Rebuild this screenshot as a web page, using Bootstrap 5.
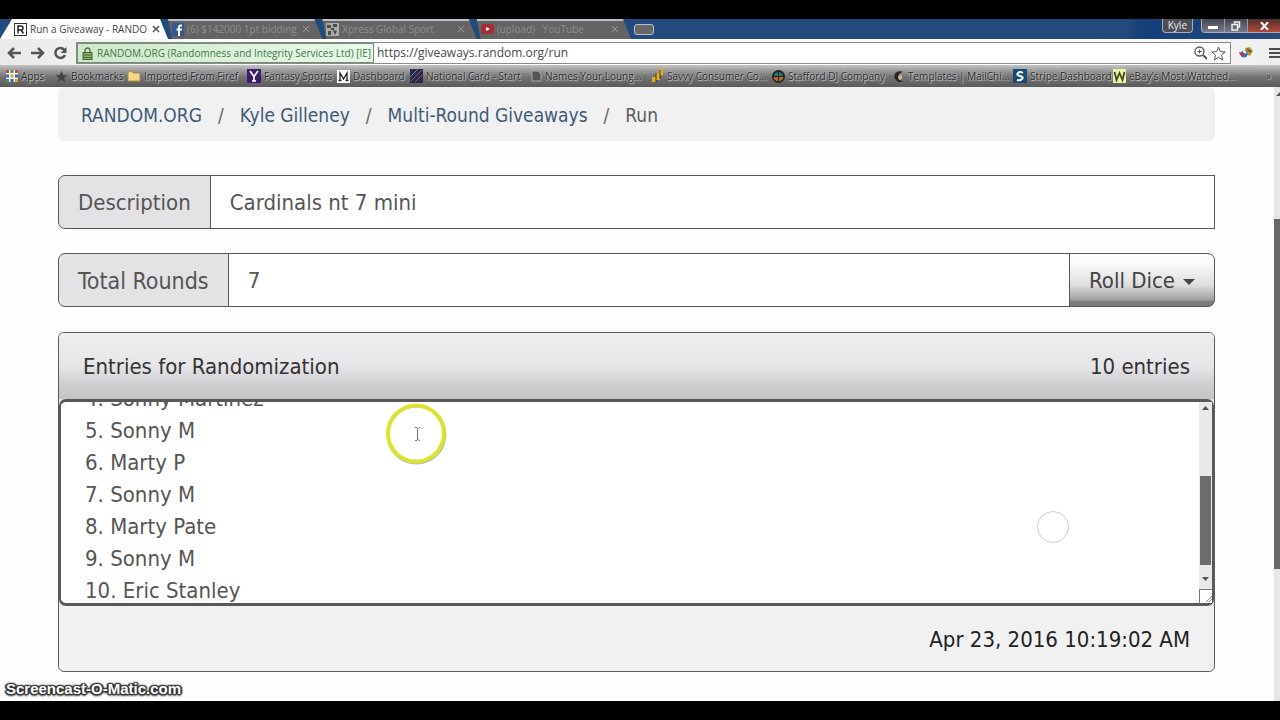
<!DOCTYPE html>
<html lang="en">
<head>
<meta charset="utf-8">
<meta name="viewport" content="width=device-width, initial-scale=1">
<title>Run a Giveaway - RANDOM.ORG</title>
<link href="https://cdn.jsdelivr.net/npm/bootstrap@5.3.0/dist/css/bootstrap.min.css" rel="stylesheet">
<style>
  :root { --ui: "Open Sans", "Noto Sans", sans-serif; --line: #5c5a5d; --ink: #555; }
  body { font-family: "DejaVu Sans Condensed", "DejaVu Sans", sans-serif; font-size: 22px; line-height: 32px; color: var(--ink); background: #000; padding: 19px 0; }
  svg { flex: none; display: block; }

  /* window title bar and tabs */
  .titlebar { height: 20px; background: linear-gradient(90deg, #234a7c 0 88%, #17407a 89% 91%, #2b4a78 100%); font: 10px/20px var(--ui); }
  .tab-strip { width: 656px; }
  .browser-tab { flex: 1 1 0; min-width: 0; height: 20px; gap: 3px; padding: 0 12px 0 4px; background: linear-gradient(#b9bdc8 0 2px, #646464 2px); color: #8f8f8f; text-decoration: none; clip-path: polygon(0 0, calc(100% - 8px) 0, 100% 100%, 4px 100%); }
  .browser-tab.current { flex: 0 0 168px; padding: 0 8px 0 14px; background: #fff; color: #444; clip-path: polygon(12px 0, calc(100% - 8px) 0, 100% 100%, 0 100%); }
  .browser-tab span { flex: 1; min-width: 0; overflow: hidden; white-space: nowrap; }
  .new-tab { width: 20px; height: 11px; border: 1px solid #b9c0cc; border-radius: 3px; background: #666; padding: 0; margin: 0 2px 0 3px; flex: none; }
  .user-chip { height: 14px; padding: 0 5px; border: 1px solid #aab; border-top: 0; border-radius: 0 0 4px 4px; background: #4d4f58; color: #eee; font: 10px/13px var(--ui); }
  .win-controls { height: 14px; border: 1px solid #aab; border-width: 0 0 1px 1px; border-radius: 0 0 0 4px; overflow: hidden; }
  .win-controls button { width: 23px; border: 0; border-right: 1px solid #99a; padding: 0; background: linear-gradient(#43464f, #767b88); display: flex; align-items: center; justify-content: center; }
  .win-controls button:last-child { width: 32px; background: linear-gradient(#50302f, #b24a38); border: 0; }

  /* toolbar */
  .toolbar { height: 26px; background: linear-gradient(90deg, #e9e9e9 0, #fff 20%, #fff 85%, #eee); padding: 2px 0 0 7px; font: 12px/20px var(--ui); }
  .tool-btn { border: 0; background: none; padding: 0; }
  .omnibox { height: 22px; border: 1px solid #8b8b8b; background: #fff; }
  .cert { height: 20px; width: 297px; gap: 4px; padding: 0 4px; background: linear-gradient(90deg, #cfe8cb, #e9f8ea); border: 1px solid #6f8f6d; color: #3f7a43; font-size: 10px; white-space: nowrap; }
  .omnibox input { border: 0; padding: 0 3px; color: #484848; outline: 0; height: 20px; min-width: 0; background: none; }

  /* bookmarks */
  .bookmark-bar { display: grid; grid-template-columns: 49fr 72fr 120fr 90fr 73fr 121fr 120fr 121fr 121fr 120fr 100fr 153fr 14fr; height: 22px; padding-left: 6px; background: linear-gradient(#c3c3c3 0, #929292 7px, #727272 12px, #5b5b5b 100%); font: 10px/22px var(--ui); }
  .bookmark-bar a { display: flex; align-items: center; gap: 3px; min-width: 0; overflow: hidden; color: #262626; text-shadow: 0 0 2px #ddd, 1px 1px 1px #bbb; white-space: nowrap; text-decoration: none; }

  /* page */
  .page-body { background: #fefefe; padding: 0 59px 29px 58px; }
  .crumbs { --bs-breadcrumb-item-padding-x: 16px; --bs-breadcrumb-divider-color: #666; --bs-breadcrumb-item-active-color: #5c5c5c; background: #f1f1f1; border-radius: 6px; padding: 12px 23px 10px; margin-bottom: 34px; font-size: 19px; }
  .crumbs a { color: #3d5b76; text-decoration: none; }
  .field { height: 54px; margin-bottom: 24px; }
  .field .input-group-text, .field .form-control { font-size: 22px; line-height: 32px; padding: 2px 19px 0; color: var(--ink); border: 1px solid #59575a; }
  .field .input-group-text { background: #e3e2e4; border-radius: 7px 0 0 7px; }
  .field .input-group-text.wide { font-size: 23px; }
  .field .form-control { background: #fff; border-radius: 0; }
  .field .dice { font-size: 22px; line-height: 32px; padding: 2px 19px 0; color: #444; border: 1px solid #59575a; border-radius: 0 7px 7px 0; background: linear-gradient(#fcfcfc 15%, #dedede 60%, #a0a0a0 88%, #7c7c7c 92%); }
  .dice::after { border-width: 6px; border-bottom: 0; margin-left: 8px; vertical-align: 3px; }
  .entries { border: 1px solid var(--line); border-radius: 6px; overflow: hidden; background: #f1f1f1; color: inherit; margin-top: 25px; }
  .entries .card-header { height: 66px; padding: 2px 24px 0; color: #333; border: 0; background: linear-gradient(#f0eff0, #e6e5e7 50%, #cdcccf 80%, #c4c3c6); border-radius: 0; }
  .list-box { height: 207px; background: #e4e4e4; }
  .list-box textarea { height: 207px; width: 100%; resize: none; border: 2px solid #59575a; border-width: 3px 2px; border-radius: 7px; padding: 12px 24px; font-size: 22px; line-height: 32px; color: var(--ink); overflow: hidden; background: #fff; display: block; }
  .entries .card-footer { height: 65px; padding: 2px 24px 0; background: #f1f1f1; border: 0; color: #222; }
  .inner-bar { top: 3px; right: 2px; bottom: 3px; width: 13px; background: #e9e9e9; }
  .inner-thumb { position: absolute; left: 1px; right: 1px; top: 37%; height: 44%; background: #6c6c6c; }
  .ring { left: 326px; top: 3px; }
  .ghost-ring { right: 144px; top: 111px; }
  .page-bar { width: 6px; background: #e6e6e6; }
  .page-thumb { height: 57%; background: #686868; margin: auto 0; }
  .watermark { left: 6px; bottom: 2px; font: bold 15px/20px "Liberation Sans", Arial, sans-serif; color: #fff; text-shadow: 1px 1px 1px #333, -1px -1px 1px #333, 1px -1px 1px #333, -1px 1px 1px #333, 0 0 3px #333, 0 2px 2px #444, 2px 0 1px #444, -2px 0 1px #444; }
</style>
</head>
<body class="d-flex flex-column min-vh-100">

<header>
  <div class="titlebar d-flex align-items-start">
    <nav class="tab-strip d-flex align-items-center" aria-label="Tabs">
      <a class="browser-tab current d-flex align-items-center" href="#">
        <svg width="13" height="13" viewBox="0 0 13 13"><rect x=".5" y=".5" width="12" height="12" fill="#fff" stroke="#333"/><path d="M4 10.500V3h3a2 2 0 0 1 0 4H4M7 7l2.500 3.500" fill="none" stroke="#222" stroke-width="1.500"/></svg>
        <span>Run a Giveaway - RANDO</span>
        <svg width="8" height="8" viewBox="0 0 8 8"><path d="M1 1l6 6M7 1L1 7" stroke="#555" stroke-width="1.500"/></svg>
      </a>
      <a class="browser-tab d-flex align-items-center" href="#">
        <svg width="12" height="13" viewBox="0 0 12 13"><rect width="12" height="13" fill="#39578f"/><path d="M10 2.500H8.500Q7 2.500 7 4.500V13M4.500 6.500H10" stroke="#fff" stroke-width="2" fill="none"/></svg>
        <span>(6) $142000 1pt bidding</span>
        <svg width="8" height="8" viewBox="0 0 8 8"><path d="M1 1l6 6M7 1L1 7" stroke="#999"/></svg>
      </a>
      <a class="browser-tab d-flex align-items-center" href="#">
        <svg width="13" height="13" viewBox="0 0 13 13"><rect width="13" height="13" fill="#aaa"/><path d="M1 2h4v3H1zM7 1h4v3H7zM2 8h3v4H2zM7 7l4 1-2 4zM5 5h3v2H5z" fill="#4a4a4a"/></svg>
        <span>Xpress Global Sport</span>
        <svg width="8" height="8" viewBox="0 0 8 8"><path d="M1 1l6 6M7 1L1 7" stroke="#999"/></svg>
      </a>
      <a class="browser-tab d-flex align-items-center" href="#">
        <svg width="13" height="10" viewBox="0 0 13 10"><rect width="13" height="10" rx="3" fill="#a52b39"/><path d="M5 3l4 2-4 2z" fill="#fff"/></svg>
        <span>(upload) &nbsp; YouTube</span>
        <svg width="8" height="8" viewBox="0 0 8 8"><path d="M1 1l6 6M7 1L1 7" stroke="#999"/></svg>
      </a>
      <button class="new-tab" aria-label="New tab"></button>
    </nav>
    <div class="ms-auto d-flex gap-2">
      <button class="user-chip">Kyle</button>
      <div class="win-controls d-flex">
        <button aria-label="Minimize"><svg width="10" height="8"><path d="M0 4h10v3H0z" fill="#fff"/></svg></button>
        <button aria-label="Restore"><svg width="10" height="10" viewBox="0 0 10 10"><path d="M3.500 2.500V1h5v5H7M1 3.500h5.500V9H1z" fill="none" stroke="#eee" stroke-width="1.500"/></svg></button>
        <button aria-label="Close"><svg width="9" height="8" viewBox="0 0 9 8"><path d="M1 0l7 8M8 0L1 8" stroke="#fff" stroke-width="2"/></svg></button>
      </div>
    </div>
  </div>

  <div class="toolbar d-flex align-items-center">
    <button class="tool-btn me-2" aria-label="Back"><svg width="15" height="14" viewBox="0 0 15 14"><path d="M14 7H2M7 2L2 7l5 5" fill="none" stroke="#555" stroke-width="2.500"/></svg></button>
    <button class="tool-btn me-2" aria-label="Forward"><svg width="15" height="14" viewBox="0 0 15 14"><path d="M1 7h12M8 2l5 5-5 5" fill="none" stroke="#555" stroke-width="2.500"/></svg></button>
    <button class="tool-btn me-2" aria-label="Reload"><svg width="15" height="14" viewBox="0 0 15 14"><path d="M11.500 4A5 5 0 1 0 12 9" fill="none" stroke="#555" stroke-width="2.500"/><path d="M13.500 1v6h-6z" fill="#555"/></svg></button>
    <div class="omnibox d-flex flex-grow-1 align-items-center">
      <div class="cert d-flex align-items-center">
        <svg width="11" height="13" viewBox="0 0 11 13"><path d="M3 6V3.500a2.500 2.500 0 0 1 5 0V6" fill="none" stroke="#66705d" stroke-width="1.500"/><rect x="1" y="5.500" width="9" height="7" fill="#8dbb55" stroke="#4d5f42"/><path d="M1 8h9M1 10.500h9" stroke="#4d5f42"/></svg>
        RANDOM.ORG (Randomness and Integrity Services Ltd) [IE]
      </div>
      <input class="flex-grow-1" type="text" aria-label="Address" value="https://giveaways.random.org/run">
      <svg class="me-1" width="13" height="14" viewBox="0 0 13 14"><circle cx="5.500" cy="5.500" r="4.500" fill="none" stroke="#555" stroke-width="1.300"/><path d="M9 9l4 4" stroke="#555" stroke-width="2"/><path d="M3.500 5.500h4M5.500 3.500v4" stroke="#555"/></svg>
      <svg class="me-1" width="15" height="15" viewBox="0 0 15 15"><path d="M7.500 1l1.900 4.700 4.800.3-3.700 3.100 1.200 4.900-4.200-2.700L3.300 14l1.200-4.900L.8 6l4.800-.3z" fill="#fff" stroke="#555"/></svg>
    </div>
    <svg class="ms-2 me-3" width="14" height="14" viewBox="0 0 14 14"><path d="M6 2l5-1 3 4-3 5-4-2z" fill="#c29a31"/><path d="M8 3l4 3" stroke="#4d5f3c" stroke-width="2"/><circle cx="5" cy="8" r="3.500" fill="#3e6dab"/><path d="M0 6l4 1 1 3-4-1z" fill="#c23b34"/><path d="M4 5l3 2" stroke="#fff" stroke-width="2"/></svg>
    <button class="tool-btn" aria-label="Menu"><svg width="11" height="12" viewBox="0 0 11 12"><path d="M0 2h11M0 6h11M0 10h11" stroke="#4d4d4d" stroke-width="2"/></svg></button>
  </div>

  <nav class="bookmark-bar" aria-label="Bookmarks">
    <a href="#"><svg width="12" height="12" viewBox="0 0 12 12"><path fill="#eee" d="M0 0h12v12H0z"/><path fill="#c94b40" d="M0 0h3v3H0zM9 0h3v3H9z"/><path fill="#3f9a62" d="M4.500 0h3v3h-3zM0 9h3v3H0z"/><path fill="#3569b0" d="M0 4.500h3v3H0zM9 4.500h3v3H9zM4.500 9h3v3h-3z"/><path fill="#dca237" d="M4.500 4.500h3v3h-3zM9 9h3v3H9z"/></svg>Apps</a>
    <a href="#"><svg width="13" height="13" viewBox="0 0 15 15"><path d="M7.500 1l1.900 4.700 4.800.3-3.700 3.100 1.200 4.900-4.200-2.700L3.300 14l1.200-4.900L.8 6l4.800-.3z" fill="#444"/></svg>Bookmarks</a>
    <a href="#"><svg width="14" height="12" viewBox="0 0 14 12"><path d="M1 2l4-1 1 2h7v8H1z" fill="#f2d886" stroke="#a98d48"/></svg>Imported From Firef</a>
    <a href="#"><svg width="14" height="14" viewBox="0 0 14 14"><path fill="#3c1c6d" d="M0 0h14v14H0z"/><path d="M3 2l4 5.500L11 2M7 7v5M5 12h4" fill="none" stroke="#fff" stroke-width="1.700"/></svg>Fantasy Sports</a>
    <a href="#"><svg width="13" height="13" viewBox="0 0 13 13"><path fill="#fff" d="M0 0h13v13H0z"/><path d="M3 10V3l3.500 6L10 3v7M1.500 10.500h3M8.500 10.500h3" fill="none" stroke="#222" stroke-width="1.300"/></svg>Dashboard</a>
    <a href="#"><svg width="13" height="14" viewBox="0 0 13 14"><path fill="#252b50" d="M0 0h13v14H0z"/><path d="M1 12L12 1M5 13l7-7" stroke="#a94a4b"/><path d="M0 8l8-8" stroke="#6384b4"/></svg>National Card - Start</a>
    <a href="#"><svg width="11" height="12" viewBox="0 0 11 12"><path d="M1 1h6l3 3v7H1z" fill="#555" stroke="#aaa"/></svg>Names Your Loung...</a>
    <a href="#"><svg width="13" height="14" viewBox="0 0 13 14"><path d="M1 8h4v5H1zM5 4h4v7H5zM8 0h4v6H8z" fill="#e2af25"/><path d="M5 4v9M9 1v9" stroke="#3e3515"/></svg>Savvy Consumer Co...</a>
    <a href="#"><svg width="13" height="13" viewBox="0 0 13 13"><circle cx="6.500" cy="6.500" r="5.500" fill="#2b7779" stroke="#222" stroke-width="2"/><path d="M1.500 6.500h10a5 5 0 0 1-10 0" fill="#b46a2b"/><path d="M1 6.500h11M6.500 1v11" stroke="#222"/></svg>Stafford DJ Company</a>
    <a href="#"><svg width="12" height="13" viewBox="0 0 12 13"><path d="M10 2C3-1-1 6 3 10s7 1 7 1-5 0-5-4 5-5 5-5z" fill="#262626"/><path d="M5 6l4-1v4l-3 1z" fill="#d7b78a"/></svg>Templates | MailChi...</a>
    <a href="#"><svg width="14" height="14" viewBox="0 0 14 14"><path fill="#174b73" d="M0 0h14v14H0z"/><path d="M10 4Q7 2 5 4t2 3 2 3-5 1" fill="none" stroke="#fff" stroke-width="2"/></svg>Stripe Dashboard</a>
    <a href="#"><svg width="13" height="14" viewBox="0 0 13 14"><path fill="#eff3a5" d="M0 0h13v14H0z"/><path d="M1.500 3l2 8 3-7 3 7 2-8" fill="none" stroke="#3c4a22" stroke-width="1.800"/></svg>eBay's Most Watched...</a>
    <a href="#" aria-label="More bookmarks">»</a>
  </nav>
</header>

<div class="d-flex flex-grow-1">
  <main class="page-body flex-grow-1 position-relative">
    <nav aria-label="breadcrumb">
      <ol class="breadcrumb crumbs">
        <li class="breadcrumb-item"><a href="#">RANDOM.ORG</a></li>
        <li class="breadcrumb-item"><a href="#">Kyle Gilleney</a></li>
        <li class="breadcrumb-item"><a href="#">Multi-Round Giveaways</a></li>
        <li class="breadcrumb-item active" aria-current="page">Run</li>
      </ol>
    </nav>

    <div class="input-group field">
      <label class="input-group-text" for="description">Description</label>
      <input class="form-control" id="description" type="text" value="Cardinals nt 7 mini">
    </div>

    <div class="input-group field">
      <label class="input-group-text wide" for="rounds">Total Rounds</label>
      <input class="form-control" id="rounds" type="text" value="7">
      <button class="btn dropdown-toggle dice" type="button" data-bs-toggle="dropdown" aria-expanded="false">Roll Dice</button>
    </div>

    <section class="card entries">
      <div class="card-header d-flex align-items-center justify-content-between">
        <label for="entries">Entries for Randomization</label>
        <span>10 entries</span>
      </div>
      <div class="list-box position-relative">
        <textarea id="entries">1. Marty P
2. Sonny M
3. Eric Stanley
4. Sonny Martinez
5. Sonny M
6. Marty P
7. Sonny M
8. Marty Pate
9. Sonny M
10. Eric Stanley</textarea>
        <div class="inner-bar position-absolute d-flex flex-column align-items-center justify-content-between">
          <svg class="mt-1" width="7" height="4"><path d="M0 4l3.500-4L7 4z" fill="#555"/></svg>
          <div class="inner-thumb"></div>
          <svg class="mt-auto mb-2" width="7" height="4"><path d="M0 0l3.500 4L7 0z" fill="#555"/></svg>
          <svg width="13" height="14" viewBox="0 0 13 14"><path d="M.5 14V.5H13V14z" fill="#fff"/><path d="M.5 14V.5H13" fill="none" stroke="#777"/><path d="M7 13l6-6M10 13l3-3" stroke="#888"/></svg>
        </div>
        <svg class="ring position-absolute" width="62" height="64" viewBox="0 0 62 64">
          <circle cx="31.500" cy="32.500" r="28.500" fill="none" stroke="#777" stroke-opacity=".5" stroke-width="3"/>
          <circle cx="31" cy="31.500" r="28" fill="none" stroke="#dde32b" stroke-width="4"/>
          <path d="M30 25.500h2l1 1 1-1h1M32.500 26v12M30 38.500h2l1-1 1 1h1" fill="none" stroke="#777"/>
        </svg>
        <svg class="ghost-ring position-absolute" width="34" height="34"><circle cx="17" cy="17" r="15.500" fill="none" stroke="#ccc"/></svg>
      </div>
      <div class="card-footer d-flex align-items-center justify-content-end">Apr 23, 2016 10:19:02 AM</div>
    </section>
    <div class="watermark position-absolute">Screencast-O-Matic.com</div>
  </main>
  <div class="page-bar d-flex flex-column" aria-hidden="true">
    <svg class="mt-1 position-absolute" width="6" height="6"><path d="M2 5l4-4v4z" fill="#555"/></svg>
    <div class="page-thumb"></div>
  </div>
</div>

<script src="https://cdn.jsdelivr.net/npm/bootstrap@5.3.0/dist/js/bootstrap.bundle.min.js"></script>
<script>
  document.getElementById('entries').scrollTop = 127;
</script>
</body>
</html>
